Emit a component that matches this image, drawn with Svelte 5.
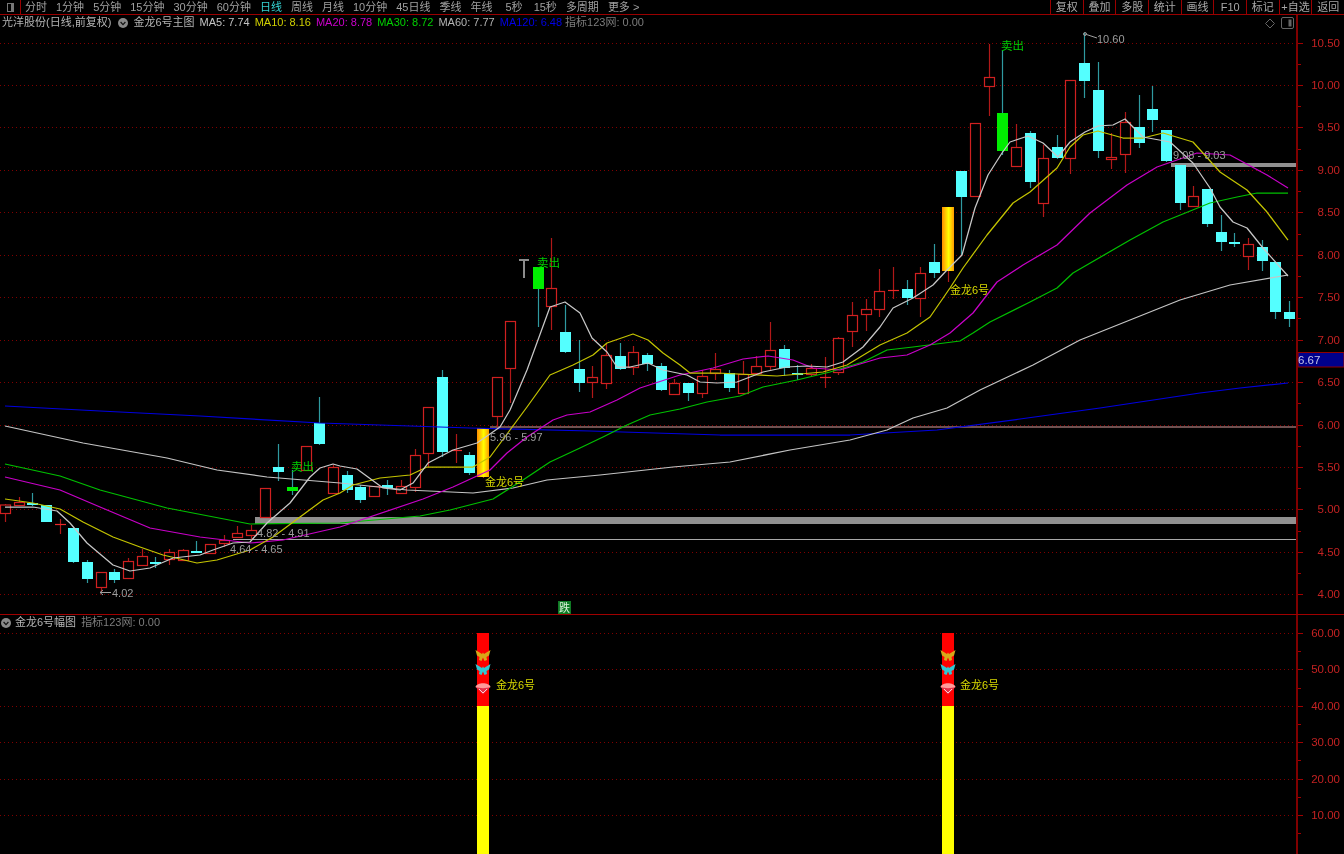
<script>
  const tabs = [
    ['分时'], ['1分钟'], ['5分钟'], ['15分钟'], ['30分钟'], ['60分钟'],
    ['日线', 'active'], ['周线'], ['月线'], ['10分钟'], ['45日线'], ['季线'], ['年线'],
    ['5秒', 'five'], ['15秒'], ['多周期'], ['更多 >']
  ];
  const tools = ['复权', '叠加', '多股', '统计', '画线', 'F10', '标记', '+自选', '返回'];
  const mas = [
    ['MA5: 7.74', 'ma5'], ['MA10: 8.16', 'ma10'], ['MA20: 8.78', 'ma20'],
    ['MA30: 8.72', 'ma30'], ['MA60: 7.77', 'ma60'], ['MA120: 6.48', 'ma120']
  ];

  // type, high, box top, box bottom, low (pixels)
  const candles = [
    ['r',504,504.5,513,522],['r',497,502,505,505],['c',493,503,505,506],['c',505,505,522,522],['r',519,524,524,534],
    ['c',528,528,562,563],['c',560,562,579,583],['r',572,572,587,593],['c',569,572,580,583],['r',558,561,578,579],
    ['r',549,556,565,566],['c',557,562,562,568],['r',549,552,559,565],['r',549,550,560,561],['c',541,551,551,553],
    ['r',544,544,553,554],['r',535,540,543,547],['r',526,533,537,538],['r',525,530,535,540],['r',488,488,517,518],
    ['c',444,467,472,481],['g',470,487,491,495],['r',446,446,470,471],['c',397,423,444,445],['r',465,467,493,494],
    ['c',471,475,490,493],['c',485,487,500,503],['r',486,486,496,497],['c',480,485,488,495],['r',480,486,493,494],
    ['r',449,455,487,492],['r',407,407,453,467],['c',370,377,452,457],['r',434,450,450,463],['c',452,455,473,475],
    ['y',428,428,477,478],['r',377,377,416,427],['r',321,321,368,403],['t',259,259,278,278],['g',267,267,289,327],
    ['r',238,288,306,330],['c',305,332,352,353],['c',340,369,383,392],['r',366,377,382,398],['r',343,355,383,389],
    ['c',343,356,369,370],['r',346,352,367,375],['c',353,355,364,371],['c',363,366,390,391],['r',379,383,394,395],
    ['c',383,383,393,401],['r',370,376,393,398],['r',353,369,373,380],['c',370,373,388,392],['r',361,374,393,394],
    ['r',356,366,373,375],['r',322,350,366,370],['c',345,349,368,376],['c',365,373,373,380],['r',364,368,374,376],
    ['r',357,377,377,388],['r',337,338,372,375],['r',302,315,331,347],['r',299,309,314,331],['r',269,291,309,317],
    ['r',267,290,290,299],['c',280,289,298,305],['r',267,273,298,317],['c',244,262,273,278],['y',207,207,271,282],
    ['c',171,171,197,255],['r',123,123,196,197],['r',44,77,86,116],['g',50,113,151,155],['r',124,147,166,167],
    ['c',131,133,182,188],['r',145,158,203,217],['c',135,147,158,159],['r',80,80,158,174],['c',33,63,81,98],
    ['c',62,90,151,158],['r',133,157,159,169],['r',112,122,154,173],['c',95,127,143,148],['c',86,109,120,132],
    ['c',130,130,161,162],['c',165,165,203,210],['r',186,196,206,207],['c',189,189,224,227],['c',215,232,242,251],
    ['c',233,242,244,247],['r',238,244,256,270],['c',240,247,261,271],['c',262,262,312,319],['c',301,312,319,327]
  ].map((c, i) => ({ k: c[0], x: Math.round(5 + i * 13.66), hi: c[1], top: c[2], bot: c[3], lo: c[4] }));

  const pts = (a) => a.map((p) => p.join(',')).join(' ');
  const lines = [
    ['l120', [[5,406],[100,411],[200,416],[320,423],[470,428],[590,431],[720,435],[850,435],[937,430],[1020,419],[1100,408],[1200,393],[1240,388],[1288,383]]],
    ['l60', [[5,426],[83,443],[167,458],[217,470],[267,477],[340,483],[407,490],[473,493],[513,488],[547,480],[600,475],[673,467],[730,462],[790,450],[850,440],[887,430],[913,418],[947,408],[980,390],[1033,365],[1080,340],[1130,320],[1180,300],[1230,285],[1288,275]]],
    ['l30', [[5,464],[60,476],[100,490],[167,508],[250,524],[340,523],[420,516],[450,510],[493,499],[523,480],[550,462],[580,448],[603,437],[627,425],[650,415],[680,409],[707,402],[740,396],[763,387],[797,380],[830,372],[863,362],[887,350],[913,347],[960,341],[973,333],[990,322],[1030,302],[1057,288],[1073,273],[1130,240],[1163,222],[1210,203],[1237,197],[1257,193],[1288,193]]],
    ['l20', [[5,477],[60,490],[100,507],[150,528],[200,537],[250,543],[283,540],[340,527],[423,499],[453,487],[490,470],[507,453],[527,437],[553,420],[567,415],[590,412],[617,400],[640,388],[680,375],[713,368],[743,359],[768,356],[793,360],[813,368],[840,370],[880,358],[907,355],[930,345],[950,333],[973,313],[997,282],[1023,265],[1057,245],[1090,213],[1127,185],[1157,167],[1197,153],[1230,155],[1267,175],[1288,188]]],
    ['l10', [[5,499],[33,503],[60,509],[83,522],[113,537],[140,547],[163,555],[197,563],[217,560],[250,550],[273,537],[300,517],[323,500],[340,493],[353,485],[380,478],[410,475],[427,467],[473,467],[490,457],[510,430],[527,407],[550,375],[573,365],[593,355],[607,343],[633,334],[648,340],[663,353],[680,365],[690,373],[717,373],[777,376],[823,372],[847,365],[880,345],[907,333],[930,317],[950,288],[963,268],[987,235],[1013,203],[1030,192],[1057,168],[1070,147],[1083,135],[1098,131],[1123,138],[1143,138],[1163,133],[1193,142],[1220,172],[1247,190],[1267,212],[1288,240]]],
    ['l5', [[5,507],[33,507],[57,511],[70,523],[87,543],[113,565],[130,571],[150,568],[173,558],[200,555],[213,550],[233,543],[250,542],[267,523],[290,503],[310,477],[320,468],[333,464],[340,466],[357,469],[383,488],[400,490],[413,483],[428,463],[453,450],[477,443],[500,427],[510,410],[527,370],[550,307],[565,302],[580,313],[592,338],[607,352],[617,367],[630,367],[648,363],[663,370],[687,375],[700,382],[717,383],[737,382],[763,372],[787,367],[807,366],[827,367],[843,362],[863,347],[880,327],[893,308],[913,298],[933,285],[947,270],[962,255],[975,208],[988,175],[1002,153],[1010,142],[1028,136],[1043,143],[1058,157],[1070,142],[1085,132],[1098,126],[1113,125],[1125,119],[1143,137],[1170,142],[1193,163],[1210,188],[1220,207],[1233,222],[1247,228],[1263,248],[1288,276]]]
  ];

  const priceY = (p) => 42.5 + (10.5 - p) * 84.9;
  const upperTicks = Array.from({ length: 14 }, (_, i) => 4 + i * 0.5);
  const upperMinor = Array.from({ length: 13 }, (_, i) => 4.25 + i * 0.5);
  const lowerY = (v) => 633 + (60 - v) * 3.64;
  const lowerTicks = [60, 50, 40, 30, 20, 10];
  const lowerMinor = [55, 45, 35, 25, 15, 5];
  const bars = [483, 948];
  const priceLabels = [
    ['4.02', 112, 597], ['4.64 - 4.65', 230, 553], ['4.82 - 4.91', 257, 537],
    ['5.96 - 5.97', 490, 441], ['9.08 - 9.03', 1173, 159], ['10.60', 1097, 43]
  ];
</script>

<div class="screen">
  <header class="toolbar">
    <div class="home"><span class="home-icon"></span></div>
    <nav class="tabs">
      {#each tabs as [label, kind]}
        <span class="tab {kind ?? ''}">{label}</span>
      {/each}
    </nav>
    <div class="tools">
      {#each tools as label}
        <span class="tool">{label}</span>
      {/each}
    </div>
  </header>

  <section class="pane upper">
    <div class="title">
      <span class="stock">光洋股份(日线,前复权)</span>
      <svg class="chev first" width="10" height="10" viewBox="0 0 10 10"><circle cx="5" cy="5" r="5" fill="#8a8a8a"/><path d="M2.6 4l2.4 2.6L7.4 4" fill="none" stroke="#111" stroke-width="1.2"/></svg>
      <span class="stock">金龙6号主图</span>
      {#each mas as [text, cls]}
        <span class={cls}>{text}</span>
      {/each}
      <span class="dim tight">指标123网: 0.00</span>
      <svg class="corner" width="30" height="12" viewBox="0 0 30 12"><path d="M5 2l4.5 4.5L5 11 .5 6.5z" fill="none" stroke="#666"/><rect x="16.5" y=".5" width="12" height="11" rx="1.5" fill="none" stroke="#666"/><rect x="23.5" y="2.5" width="3" height="7" fill="#666"/></svg>
    </div>
    <svg class="chart" width="1344" height="599" viewBox="0 15 1344 599">
      <defs>
        <linearGradient id="gold" x1="0" x2="1" y1="0" y2="0">
          <stop offset="0" stop-color="#ff8c00"/>
          <stop offset=".55" stop-color="#ffff00"/>
          <stop offset="1" stop-color="#ff9a00"/>
        </linearGradient>
      </defs>
      {#each upperTicks as p}
        <line class="grid" x1="0" x2="1296" y1={Math.round(priceY(p)) + 0.5} y2={Math.round(priceY(p)) + 0.5}/>
        <line class="axis" x1="1298" x2="1303" y1={Math.round(priceY(p)) + 0.5} y2={Math.round(priceY(p)) + 0.5}/>
        <text class="axis-label" x="1340" y={priceY(p) + 4} text-anchor="end">{p.toFixed(2)}</text>
      {/each}
      {#each upperMinor as p}
        <line class="axis" x1="1298" x2="1301" y1={Math.round(priceY(p)) + 0.5} y2={Math.round(priceY(p)) + 0.5}/>
      {/each}

      <rect class="band" x="255" y="517" width="1042" height="7"/>
      <rect class="band" x="1171" y="163" width="126" height="4"/>
      <line class="thin" x1="233" x2="1297" y1="539.5" y2="539.5"/>
      <rect class="sixline" x="490" y="426" width="807" height="2"/>

      {#each candles as c}
        {#if c.k === 't'}
          <rect class="tee" x={c.x - 5} y={c.top} width="10" height="2"/>
          <rect class="tee" x={c.x - 1} y={c.top} width="2" height={c.bot - c.top}/>
        {:else if c.k === 'y'}
          <line class="wick-r" x1={c.x + 0.5} x2={c.x + 0.5} y1={c.hi} y2={c.lo}/>
          <rect fill="url(#gold)" x={c.x - 6} y={c.top} width="12" height={c.bot - c.top}/>
        {:else if c.k === 'r'}
          <line class="wick-r" x1={c.x + 0.5} x2={c.x + 0.5} y1={c.hi} y2={c.lo}/>
          {#if c.bot - c.top < 1}
            <line class="doji-r" x1={c.x - 5} x2={c.x + 6} y1={c.top + 0.5} y2={c.top + 0.5}/>
          {:else}
            <rect class="box-r" x={c.x - 4.5} y={c.top + 0.5} width="10" height={c.bot - c.top}/>
          {/if}
        {:else}
          <line class={c.k === 'c' ? 'wick-c' : 'wick-g'} x1={c.x + 0.5} x2={c.x + 0.5} y1={c.hi} y2={c.lo}/>
          <rect class={c.k === 'c' ? 'box-c' : 'box-g'} x={c.x - 5} y={c.top} width="11" height={Math.max(c.bot - c.top, 2)}/>
        {/if}
      {/each}

      {#each lines as [cls, p]}
        <polyline class="ma {cls}" points={pts(p)}/>
      {/each}

      <text class="sell" x="291" y="471">卖出</text>
      <text class="sell" x="537" y="267">卖出</text>
      <text class="sell" x="1001" y="50">卖出</text>
      <text class="gold-label" x="485" y="486">金龙6号</text>
      <text class="gold-label" x="950" y="294">金龙6号</text>

      {#each priceLabels as [t, x, y]}
        <text class="price-label" {x} {y}>{t}</text>
      {/each}
      <path class="pointer" d="M111 592.5H100M103 590l-3 2.5 3 2.5"/>
      <path class="pointer" d="M1085 34l12 4"/>
      <circle cx="1085" cy="34" r="1.5" fill="none" stroke="#999"/>

      <rect class="fall" x="558" y="601" width="13" height="13"/>
      <text class="fall-text" x="559" y="612">跌</text>

      <rect class="quote-bg" x="1298" y="352.5" width="46" height="14.5"/>
      <text class="quote" x="1298" y="364">6.67</text>
      <line class="axis-main" x1="1297" x2="1297" y1="15" y2="614"/>
    </svg>
  </section>

  <section class="pane lower">
    <div class="title sub">
      <svg class="chev" width="10" height="10" viewBox="0 0 10 10"><circle cx="5" cy="5" r="5" fill="#8a8a8a"/><path d="M2.6 4l2.4 2.6L7.4 4" fill="none" stroke="#111" stroke-width="1.2"/></svg>
      <span class="stock">金龙6号幅图</span>
      <span class="dim">指标123网: 0.00</span>
    </div>
    <svg class="chart" width="1344" height="239" viewBox="0 615 1344 239">
      <defs>
        <path id="fly" d="M-7.5-5.5L-1-1.5 0-3 1-1.5 7.5-5.5 6 0 3.5 1.5 4 4.5 1.5 5.5 0 2-1.5 5.5-4 4.5-3.5 1.5-6 0z"/>
      </defs>
      {#each lowerTicks as v}
        <line class="grid" x1="0" x2="1296" y1={Math.round(lowerY(v)) + 0.5} y2={Math.round(lowerY(v)) + 0.5}/>
        <line class="axis" x1="1298" x2="1303" y1={Math.round(lowerY(v)) + 0.5} y2={Math.round(lowerY(v)) + 0.5}/>
        <text class="axis-label" x="1340" y={lowerY(v) + 4} text-anchor="end">{v}.00</text>
      {/each}
      {#each lowerMinor as v}
        <line class="axis" x1="1298" x2="1301" y1={Math.round(lowerY(v)) + 0.5} y2={Math.round(lowerY(v)) + 0.5}/>
      {/each}
      {#each bars as x}
        <rect class="bar-red" x={x - 6} y="633" width="12" height="73"/>
        <rect class="bar-yellow" x={x - 6} y="706" width="12" height="148"/>
        <use href="#fly" x={x} y="655.5" class="fly-gold"/>
        <use href="#fly" x={x} y="669.5" class="fly-cyan"/>
        <path class="gem-low" d="M{x - 7.5} 687h15L{x} 694.5z"/>
        <path class="gem-top" d="M{x - 7.5} 687c1.5-5 13.5-5 15 0c-4 1.5-11 1.5-15 0z"/>
        <path class="gem-line" d="M{x - 4} 689L{x} 693L{x + 4} 689"/>
        <text class="gold-label" x={x + 13 - (x > 500 ? 1 : 0)} y="689">金龙6号</text>
      {/each}
      <line class="axis-main" x1="1297" x2="1297" y1="615" y2="854"/>
    </svg>
  </section>
</div>

<style>
  :global(body) { margin: 0; background: #000; }
  .screen {
    width: 1344px;
    height: 854px;
    background: #000;
    overflow: hidden;
    display: flex;
    flex-direction: column;
    font-family: "Liberation Sans", "Noto Sans CJK SC", sans-serif;
    font-size: 11px;
    color: #b4b4b4;
    filter: blur(0.35px);
  }
  .toolbar {
    display: flex;
    height: 14px;
    line-height: 14px;
    border-bottom: 1px solid #9a0000;
    flex: none;
  }
  .home {
    width: 20px;
    border-right: 1px solid #9a0000;
    display: flex;
    align-items: center;
    justify-content: center;
  }
  .home-icon {
    width: 7px;
    height: 9px;
    border: 1px solid #777;
    border-right-width: 3px;
    box-sizing: border-box;
  }
  .tabs { display: flex; gap: 9px; padding-left: 4px; flex: 1; color: #a0a0a0; }
  .tab.active { color: #35d5d5; }
  .tab.five { margin: 0 2px 0 4px; }
  .tools { width: 294px; display: flex; }
  .tool {
    flex: 1;
    text-align: center;
    border-left: 1px solid #9a0000;
    color: #a8a8a8;
  }
  .pane { position: relative; flex: none; }
  .upper { height: 599px; border-bottom: 1px solid #a00000; }
  .lower { height: 239px; }
  .chart { display: block; }
  .title {
    position: absolute;
    left: 0;
    top: 0;
    width: 1297px;
    height: 15px;
    padding-left: 2px;
    box-sizing: border-box;
    display: flex;
    align-items: center;
    gap: 5px;
    line-height: 15px;
    white-space: nowrap;
    z-index: 1;
  }
  .title.sub { top: 0; padding-left: 1px; gap: 4px; height: 15px; }
  .title.sub .dim { margin-left: 1px; }
  .chev { flex: none; }
  .chev.first { margin-left: 2px; }
  .tight { margin-left: -2px; }
  .corner { margin-left: auto; margin-right: 2px; }
  .stock { color: #b4b4b4; }
  .ma5 { color: #c4c4c4; }
  .ma10 { color: #d0d000; }
  .ma20 { color: #cc00cc; }
  .ma30 { color: #00d000; }
  .ma60 { color: #b4b4b4; }
  .ma120 { color: #0000e8; }
  .dim { color: #7c7c7c; }

  .grid { stroke: #800000; stroke-width: 1; stroke-dasharray: 1 3; }
  .axis { stroke: #a00000; stroke-width: 1; }
  .axis-main { stroke: #800000; stroke-width: 2; }
  .axis-label { fill: #c42222; font-size: 11.5px; }
  .band { fill: #909090; }
  .thin { stroke: #a8a8a8; stroke-width: 1; }
  .sixline { fill: #6e5050; }
  .tee { fill: #8c8c8c; }
  .wick-r { stroke: #b01818; stroke-width: 1.2; }
  .doji-r { stroke: #e82828; stroke-width: 1.2; }
  .box-r { fill: #000; stroke: #d02020; stroke-width: 1.2; }
  .wick-c { stroke: #2f9aa0; stroke-width: 1.2; }
  .wick-g { stroke: #2f9aa0; stroke-width: 1.2; }
  .box-c { fill: #54ffff; }
  .box-g { fill: #00ee00; }
  .ma { fill: none; stroke-width: 1.25; stroke-linejoin: round; }
  .l5 { stroke: #c8c8c8; }
  .l10 { stroke: #c4c400; }
  .l20 { stroke: #c800c8; }
  .l30 { stroke: #00c000; }
  .l60 { stroke: #c4c4c4; }
  .l120 { stroke: #0000e0; }
  .sell { fill: #00d000; font-size: 11.5px; }
  .gold-label { fill: #d8d800; font-size: 11px; }
  .price-label { fill: #9c9c9c; font-size: 11px; }
  .pointer { fill: none; stroke: #a0a0a0; stroke-width: 1; }
  .fall { fill: #0f7a24; }
  .fall-text { fill: #d8f0d8; font-size: 11px; }
  .quote-bg { fill: #00008c; stroke: #900000; stroke-width: 1; }
  .quote { fill: #c4c4e8; font-size: 11.5px; }
  .bar-red { fill: #ff0000; }
  .bar-yellow { fill: #ffff00; }
  .fly-gold { fill: #d8a818; }
  .fly-cyan { fill: #30c8d4; }
  .gem-low { fill: #e83048; }
  .gem-top { fill: #ff9a9a; }
  .gem-line { fill: none; stroke: #ffd0d0; stroke-width: 1; }
</style>
